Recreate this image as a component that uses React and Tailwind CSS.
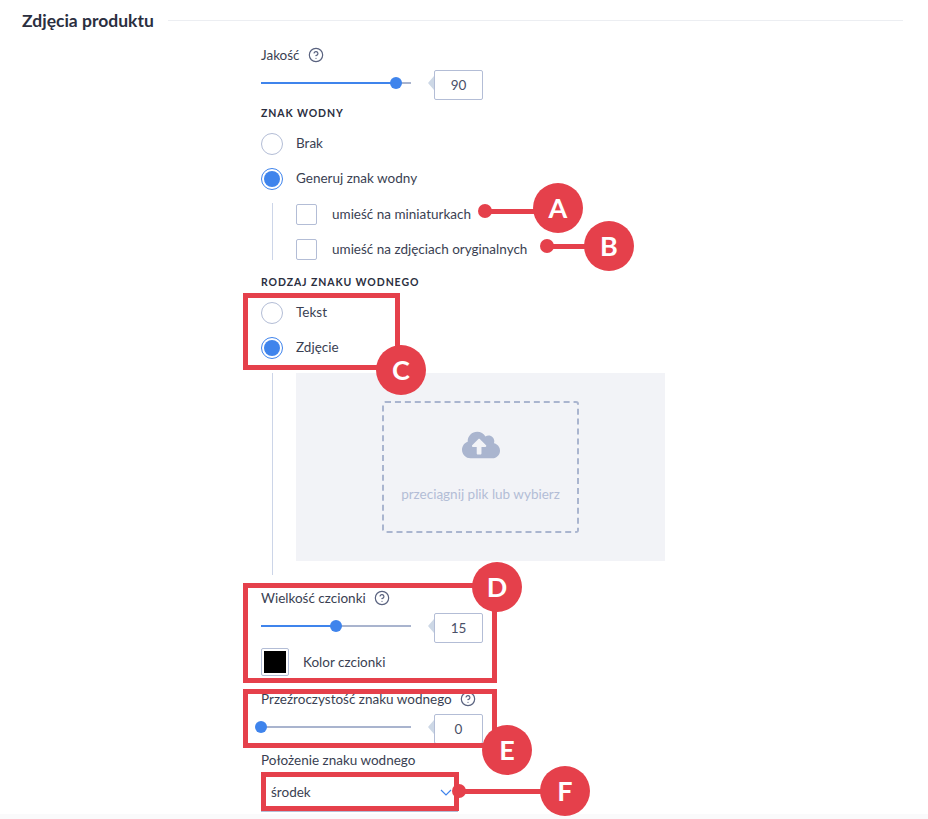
import React from "react";
import { CircleHelp } from "lucide-react";
import { FaCloudUploadAlt } from "react-icons/fa";

const Help = () => <CircleHelp size={16} strokeWidth={1.8} className="text-[#59627f] shrink-0" />;

const Slider = ({ label, help, value, percent }) => (
    <div className="w-[222px]">
        <div className="h-[20px] flex items-center gap-[8px] leading-[20px]">
            {label}
            {help && <Help />}
        </div>
        <div className="flex items-center h-[30px] mt-[5px]">
            <div className="relative w-[150px] h-[2px] mb-[4px] bg-[#a9b4ce] shrink-0">
                <div className="h-full bg-[#3f84ec]" style={{ width: `${percent}%` }}></div>
                <div
                    className="absolute top-[-5px] ml-[-6px] w-[12px] h-[12px] rounded-full bg-[#3f84ec]"
                    style={{ left: `${percent}%` }}
                ></div>
            </div>
            <div className="ml-[17px] mb-[4px] w-0 h-0 border-y-[7px] border-y-transparent border-r-[6px] border-r-[#cdd8e6]"></div>
            <div className="w-[49px] h-[30px] border border-[#b3bdd6] rounded-[2px] flex items-center justify-center text-[#4a5068]">
                {value}
            </div>
        </div>
    </div>
);

const Radio = ({ label, checked }) => (
    <div className="flex items-center h-[35px] shrink-0">
        <div className={`w-[22px] h-[22px] rounded-full border flex items-center justify-center ${checked ? "border-[#3f84ec]" : "border-[#b3bdd6]"}`}>
            {checked && <div className="w-[16px] h-[16px] rounded-full bg-[#3f84ec]"></div>}
        </div>
        <span className="ml-[13px]">{label}</span>
    </div>
);

const Checkbox = ({ label }) => (
    <div className="flex items-center h-[35px] shrink-0">
        <div className="w-[21px] h-[21px] rounded-[2px] border border-[#b3bdd6]"></div>
        <span className="ml-[15px]">{label}</span>
    </div>
);

const Heading = ({ children }) => (
    <div className="h-[20px] leading-[20px] text-[10.5px] font-bold tracking-[0.9px] text-[#2b2f3f]">{children}</div>
);

const Marker = ({ letter, className }) => (
    <div className={`absolute w-[50px] h-[50px] rounded-full bg-[#e5404b] text-white text-[27px] font-bold flex items-center justify-center ${className}`}>
        {letter}
    </div>
);

const App = () => {
    return (
        <div className="relative w-[928px] h-[819px] overflow-hidden bg-white text-[13.5px] text-[#3a3f52] font-['Lato',sans-serif]">
            <div className="flex items-center pl-[22px] pr-[25px] pt-[10px] h-[32px]">
                <h2 className="text-[17.5px] leading-[22px] font-bold text-[#2b2f3f]">Zdjęcia produktu</h2>
                <div className="flex-1 h-px bg-[#eceef2] ml-[14px] mt-[-2px]"></div>
            </div>

            <div className="pl-[261px] pt-[13px]">
                <Slider label="Jakość" help value="90" percent={90} />

                <div className="mt-[3px]"><Heading>ZNAK WODNY</Heading></div>
                <div className="mt-[3px]">
                    <Radio label="Brak" />
                    <Radio label="Generuj znak wodny" checked />
                </div>
                <div className="ml-[11px] mt-[7px] h-[57px] border-l border-[#ccd5e8] pl-[23px] flex flex-col justify-center">
                    <Checkbox label="umieść na miniaturkach" />
                    <Checkbox label="umieść na zdjęciach oryginalnych" />
                </div>

                <div className="mt-[12px]"><Heading>RODZAJ ZNAKU WODNEGO</Heading></div>
                <div className="mt-[3px]">
                    <Radio label="Tekst" />
                    <Radio label="Zdjęcie" checked />
                </div>

                <div className="ml-[11px] mt-[8px] h-[202px] border-l border-[#ccd5e8] pl-[23px]">
                    <div className="w-[369px] h-[188px] bg-[#f2f3f7] flex items-center justify-center">
                        <div className="w-[197px] h-[132px] rounded-[3px] border-2 border-dashed border-[#aab5cf] flex flex-col items-center">
                            <FaCloudUploadAlt size={38} className="text-[#aab5cf] mt-[23px]" />
                            <span className="mt-[20px] text-[#b3bdd6]">przeciągnij plik lub wybierz</span>
                        </div>
                    </div>
                </div>

                <div className="mt-[13px]">
                    <Slider label="Wielkość czcionki" help value="15" percent={50} />
                </div>
                <div className="flex items-center mt-[5px] h-[28px]">
                    <div className="w-[28px] h-[28px] border border-[#b3bdd6] rounded-[2px] p-[2px]">
                        <div className="w-full h-full bg-black"></div>
                    </div>
                    <span className="ml-[14px]">Kolor czcionki</span>
                </div>

                <div className="mt-[13px]">
                    <Slider label="Przeźroczystość znaku wodnego" help value="0" percent={0} />
                </div>

                <div className="mt-[6px] h-[20px] leading-[20px]">Położenie znaku wodnego</div>
                <div className="mt-[3px] w-[197px] h-[39px] border-b border-[#b3bdd6] flex items-center justify-between pl-[10px] pr-[6px]">
                    <span>środek</span>
                    <svg width="12" height="7" viewBox="0 0 12 7" fill="none" stroke="#3f84ec" strokeWidth="1.2">
                        <path d="M1 1l5 5 5-5" />
                    </svg>
                </div>
            </div>

            <div className="absolute left-0 right-0 bottom-0 h-[5px] bg-[#fafafb]"></div>

            {/* red annotations on top of the form */}
            <div className="absolute left-[243px] top-[293px] w-[157px] h-[77px] border-[5px] border-[#e5404b]"></div>
            <div className="absolute left-[243px] top-[583px] w-[254px] h-[100px] border-[5px] border-[#e5404b]"></div>
            <div className="absolute left-[243px] top-[689px] w-[254px] h-[59px] border-[5px] border-[#e5404b]"></div>
            <div className="absolute left-[261px] top-[772px] w-[198px] h-[39px] border-[5px] border-[#e5404b]"></div>

            <div className="absolute left-[478px] top-[204px] w-[14px] h-[14px] rounded-full bg-[#e5404b]"></div>
            <div className="absolute left-[485px] top-[209px] w-[60px] h-[5px] bg-[#e5404b]"></div>
            <div className="absolute left-[540px] top-[239px] w-[14px] h-[14px] rounded-full bg-[#e5404b]"></div>
            <div className="absolute left-[547px] top-[244px] w-[50px] h-[5px] bg-[#e5404b]"></div>
            <div className="absolute left-[452px] top-[784px] w-[14px] h-[14px] rounded-full bg-[#e5404b]"></div>
            <div className="absolute left-[459px] top-[789px] w-[90px] h-[5px] bg-[#e5404b]"></div>

            <Marker letter="A" className="left-[533px] top-[183px]" />
            <Marker letter="B" className="left-[584px] top-[221px]" />
            <Marker letter="C" className="left-[376px] top-[345px]" />
            <Marker letter="D" className="left-[472px] top-[562px]" />
            <Marker letter="E" className="left-[482px] top-[725px]" />
            <Marker letter="F" className="left-[540px] top-[766px]" />
        </div>
    );
};

export default App;
